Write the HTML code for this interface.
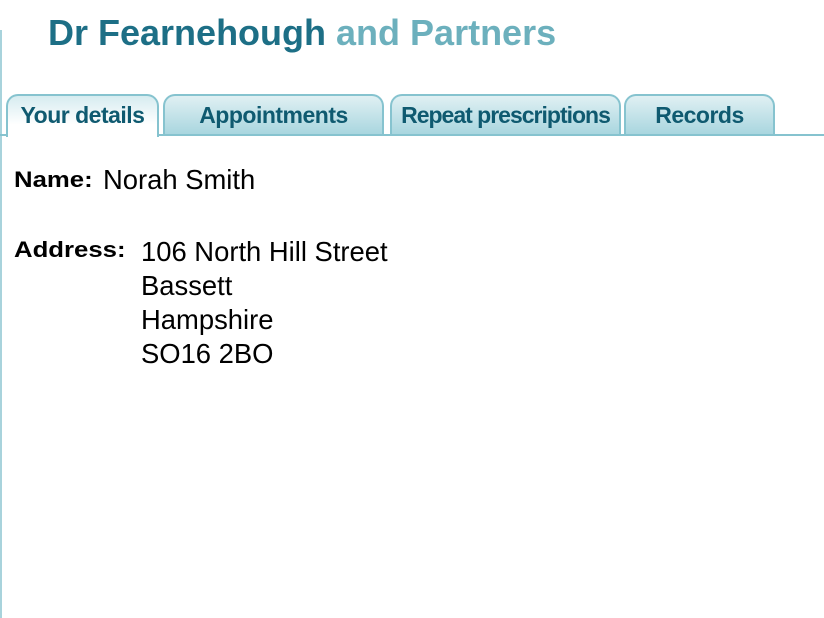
<!DOCTYPE html>
<html><head><style>
body{margin:0;width:824px;height:618px;background:#fff;position:relative;overflow:hidden;font-family:"Liberation Sans",sans-serif}
.lb{position:absolute;left:0;top:30px;width:2px;height:588px;background:#a8d3dc}
.title{position:absolute;left:48px;top:12px;font-size:36px;font-weight:bold;color:#1d6f86;white-space:nowrap}
.title span{color:#6cb0bd}
.line{position:absolute;left:0;top:134px;width:824px;height:2px;background:#86c3cf}
.tab{position:absolute;top:94px;height:40px;border:2px solid #86c3cf;border-bottom:none;border-radius:12px 12px 0 0;background:linear-gradient(#e0f0f3,#a9d6df);color:#0f5a70;font-weight:bold;font-size:23px;text-align:center;line-height:38px;box-sizing:border-box;letter-spacing:-0.5px;white-space:nowrap}
.tab.a{background:linear-gradient(#d6ecf0,#fff 70%);height:43px;z-index:2}
.lbl{position:absolute;font-weight:bold;font-size:22px;color:#000;transform:scaleX(1.17);transform-origin:left}
.v{position:absolute;font-size:27.4px;color:#000;line-height:34px}
</style></head><body>
<div class="lb"></div>
<div class="title">Dr Fearnehough <span>and Partners</span></div>
<div class="line"></div>
<div class="tab a" style="left:6px;width:153px">Your details</div>
<div class="tab" style="left:163px;width:221px">Appointments</div>
<div class="tab" style="left:390px;width:231px;letter-spacing:-1px">Repeat prescriptions</div>
<div class="tab" style="left:624px;width:151px">Records</div>
<div class="lbl" style="left:14px;top:167px">Name:</div>
<div class="v" style="left:103px;top:163px">Norah Smith</div>
<div class="lbl" style="left:14px;top:237px">Address:</div>
<div class="v" style="left:141px;top:235px">106 North Hill Street<br>Bassett<br>Hampshire<br>SO16 2BO</div>
</body></html>
